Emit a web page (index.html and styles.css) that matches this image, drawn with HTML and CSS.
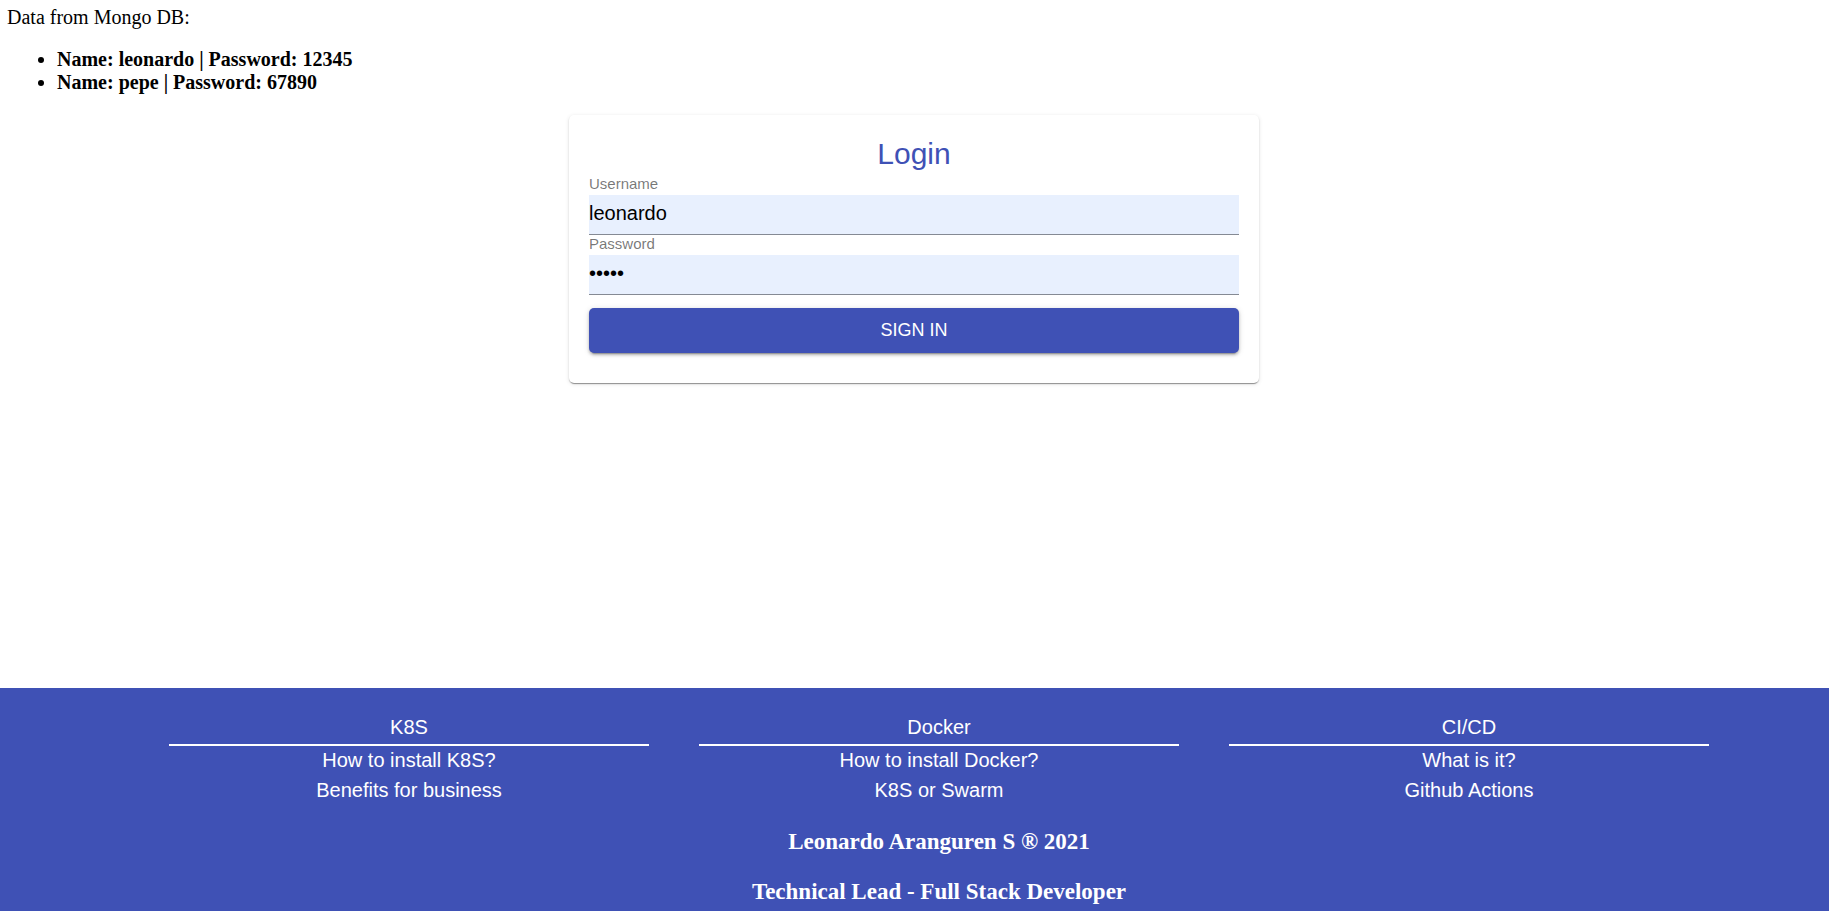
FILE: index.html
```
<!DOCTYPE html>
<html lang="en">
<head>
<meta charset="utf-8">
<title>Login</title>
<link rel="stylesheet" href="styles.css">
</head>
<body>
<main>
  <div class="data">Data from Mongo DB:
    <ul class="users">
      <li>Name: leonardo | Password: 12345</li>
      <li>Name: pepe | Password: 67890</li>
    </ul>
  </div>
  <form class="card">
    <h1 class="title">Login</h1>
    <div class="field">
      <label for="username">Username</label>
      <input id="username" type="text" value="leonardo">
    </div>
    <div class="field">
      <label for="password">Password</label>
      <input id="password" type="password" value="12345">
    </div>
    <button class="submit" type="button">Sign in</button>
  </form>
</main>
<footer class="footer">
  <div class="columns">
    <section class="column">
      <h2 class="heading">K8S</h2>
      <a href="#">How to install K8S?</a>
      <a href="#">Benefits for business</a>
    </section>
    <section class="column">
      <h2 class="heading">Docker</h2>
      <a href="#">How to install Docker?</a>
      <a href="#">K8S or Swarm</a>
    </section>
    <section class="column">
      <h2 class="heading">CI/CD</h2>
      <a href="#">What is it?</a>
      <a href="#">Github Actions</a>
    </section>
  </div>
  <h3 class="credit">Leonardo Aranguren S ® 2021</h3>
  <h3 class="credit">Technical Lead - Full Stack Developer</h3>
</footer>
</body>
</html>
```
FILE: styles.css
```
* {
  box-sizing: border-box;
}

body {
  margin: 0;
  min-height: 100vh;
  display: flex;
  flex-direction: column;
  font-family: "Liberation Serif", "Times New Roman", serif;
  font-size: 20px;
  line-height: 23px;
  color: #000;
  background: #fff;
}

main {
  flex: 1;
  padding: 6px 8px 6px 7px;
}

.users {
  margin: 19px 0 21px;
  padding-left: 50px;
  font-weight: bold;
}

.card {
  max-width: 690px;
  margin: 0 auto;
  padding: 20px 20px 30px;
  display: flex;
  flex-direction: column;
  border-radius: 5px;
  font-family: "Liberation Sans", Arial, sans-serif;
  box-shadow: 0 3px 1px -2px rgba(0, 0, 0, .2), 0 1px 1px 0 rgba(0, 0, 0, .24), 0 1px 4px 0 rgba(0, 0, 0, .12);
}

.title {
  margin: 0 0 2px;
  font-size: 30px;
  line-height: 38px;
  font-weight: 400;
  text-align: center;
  color: #3f51b5;
}

.field {
  display: flex;
  flex-direction: column;
}

.field label {
  padding-bottom: 2px;
  font-size: 15px;
  line-height: 18px;
  color: rgba(0, 0, 0, .54);
}

.field input {
  height: 40px;
  padding: 0 0 2px;
  border: 0;
  border-bottom: 1px solid #858a94;
  border-radius: 0;
  background: #e8f0fe;
  font: 20px "Liberation Sans", Arial, sans-serif;
  color: #000;
}

.submit {
  height: 45px;
  margin-top: 13px;
  border: 0;
  border-radius: 5px;
  background: #3f51b5;
  color: #fff;
  font: 18px "Liberation Sans", Arial, sans-serif;
  text-transform: uppercase;
  box-shadow: 0 4px 1px -3px rgba(0, 0, 0, .2), 0 2px 3px 0 rgba(0, 0, 0, .24), 0 1px 6px 0 rgba(0, 0, 0, .12);
}

.footer {
  padding: 25px 120px 4px 169px;
  background: #3f51b5;
  color: #fff;
}

.columns {
  display: grid;
  grid-template-columns: repeat(3, 1fr);
  column-gap: 50px;
  font-family: "Liberation Sans", Arial, sans-serif;
}

.column {
  display: flex;
  flex-direction: column;
  align-items: center;
  line-height: 28px;
}

.heading {
  align-self: stretch;
  margin: 0;
  padding-bottom: 3px;
  border-bottom: 2px solid #fff;
  font-size: 20px;
  font-weight: 400;
  text-align: center;
}

.column a {
  padding-bottom: 2px;
  color: #fff;
  text-decoration: none;
}

.credit {
  margin: 20px 0 0;
  font-size: 23px;
  line-height: 30px;
  text-align: center;
}

.columns + .credit {
  margin-top: 21px;
}
```
